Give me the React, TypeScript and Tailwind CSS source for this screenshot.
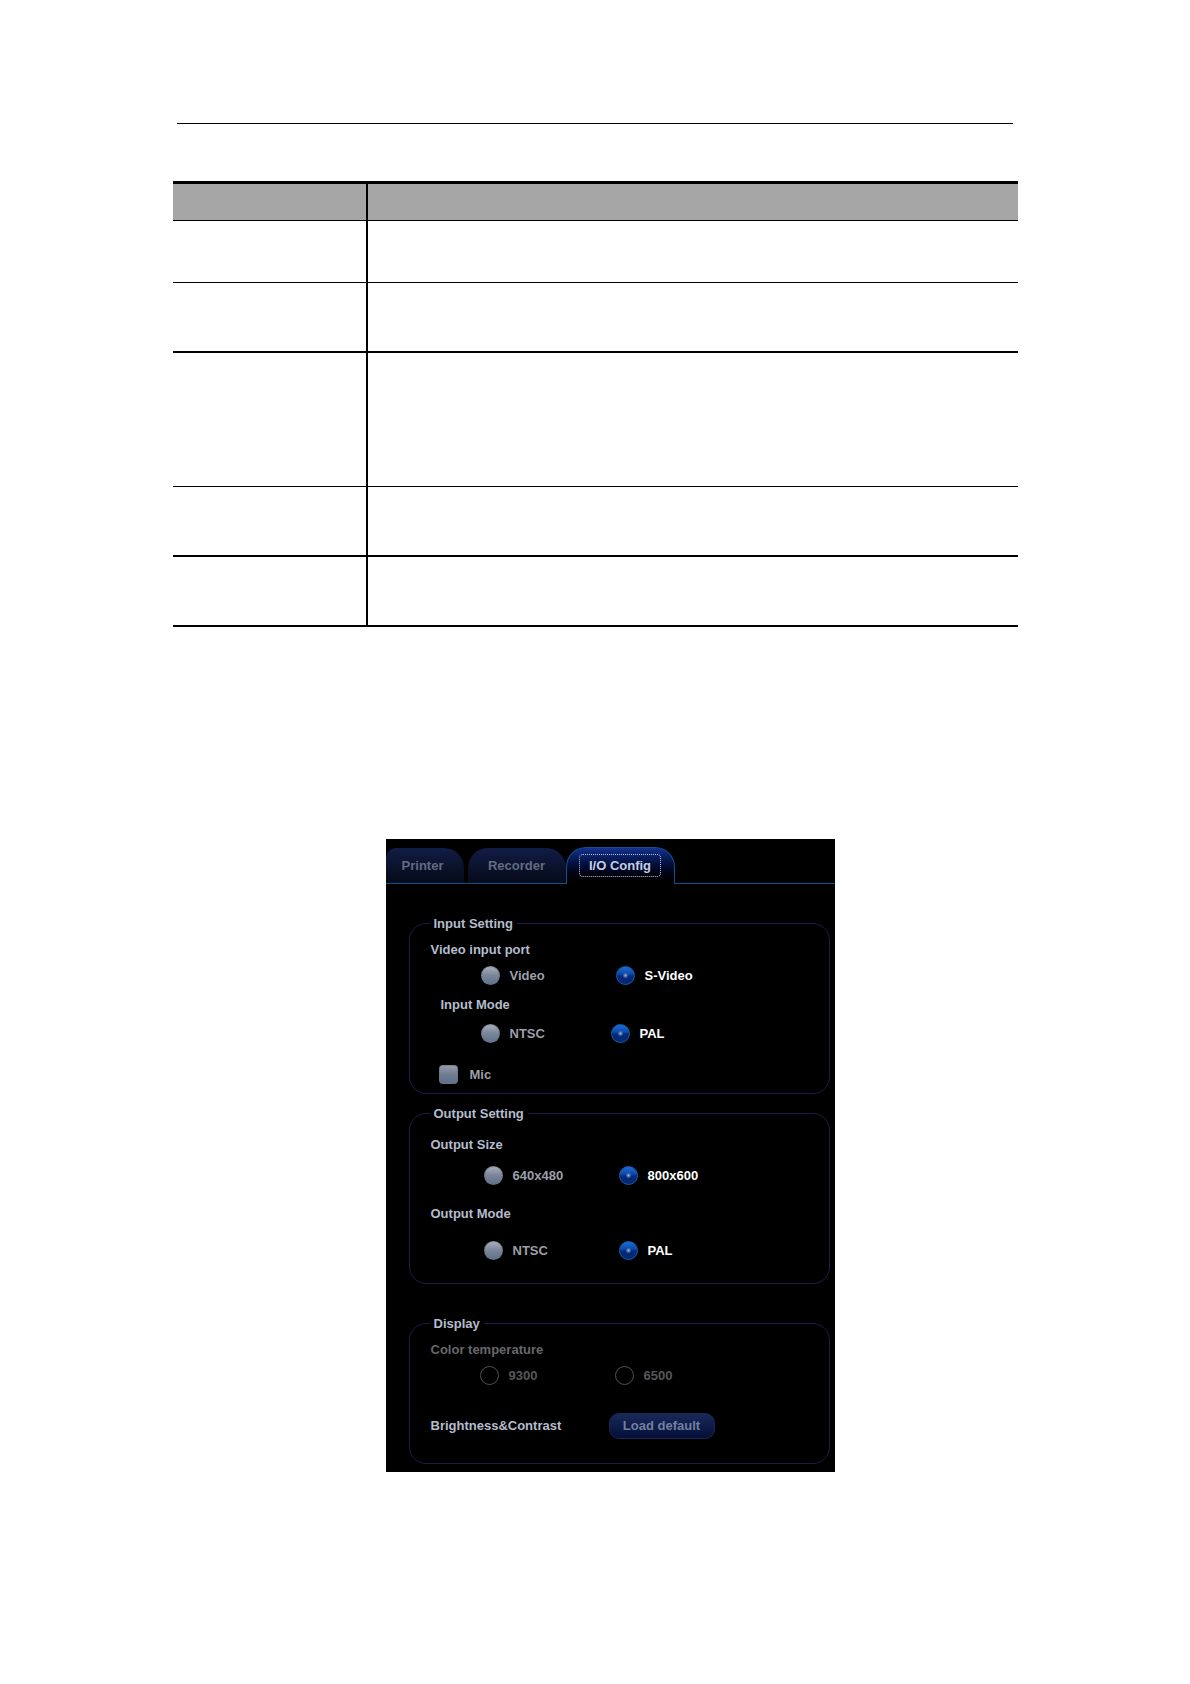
import React from 'react'

const labelColor = 'text-[#b4bccd]'

const rows = [
    'h-[62px] border-b',
    'h-[70px] border-b-2',
    'h-[134px] border-b',
    'h-[70px] border-b-2',
    'h-[70px] border-b-2',
]

type OptionProps = {
    name: string
    label: string
    checked?: boolean
    disabled?: boolean
}

function Option({ name, label, checked, disabled }: OptionProps) {
    return (
        <label className="flex h-5 items-start gap-[10px] text-[#9c9fa8] has-checked:text-white has-disabled:text-[#56575a]">
            <input
                type="radio"
                name={name}
                defaultChecked={checked}
                disabled={disabled}
                className="size-[19px] shrink-0 appearance-none rounded-full border border-[#6b7386]/60 bg-linear-to-b from-[#a3a9b6] from-10% via-[#7b8599] via-50% to-[#5b708c] bg-origin-border checked:border-[#155cb0] checked:bg-[radial-gradient(circle,#a9bfe0_0,#6584b8_1px,transparent_3px),linear-gradient(#1c6bd8_5%,#0d4aa8_42%,#04297a_54%,#06286e)] disabled:border-[#505050] disabled:bg-none"
            />
            {label}
        </label>
    )
}

function Group({ title, className, children }: { title: string; className: string; children: React.ReactNode }) {
    return (
        <fieldset className={`rounded-[17px] border border-[#1c1b52] px-[21px] ${className}`}>
            <legend className={`-ml-px h-[19px] px-1 leading-[19px] ${labelColor}`}>{title}</legend>
            {children}
        </fieldset>
    )
}

function Tabs() {
    return (
        <div role="tablist" className="flex h-[45px] items-end border-b border-[#11508c]">
            <button
                role="tab"
                aria-selected="false"
                className="mr-1 h-[35px] w-[78px] rounded-tl-[10px] rounded-tr-[20px] bg-linear-to-b from-[#121c46] to-[#050a18] pr-1 text-[#646b80]"
            >
                Printer
            </button>
            <button
                role="tab"
                aria-selected="false"
                className="h-[35px] w-[98px] rounded-t-[20px] bg-linear-to-b from-[#121c46] to-[#050a18] text-[#646b80]"
            >
                Recorder
            </button>
            <button
                role="tab"
                aria-selected="true"
                className="-mb-px flex h-[37px] w-[109px] items-start justify-center rounded-t-[20px] border border-b-0 border-[#11508c] bg-linear-to-b from-[#14318e] to-black pt-[6px] text-[#c3cce6]"
            >
                <span className="rounded-[4px] border border-dotted border-[#b8c3e4] px-[9px] leading-[21px]">I/O Config</span>
            </button>
        </div>
    )
}

function IOConfig() {
    return (
        <section className="w-full max-w-[449px] bg-black pb-2 text-[13px] leading-5 font-bold">
            <Tabs />
            <div className="pt-[30px] pr-[5px] pl-[23px]">
                <Group title="Input Setting" className="pb-2">
                    <p className={`mt-[7px] ${labelColor}`}>Video input port</p>
                    <div className="mt-[6px] grid grid-cols-[135px_1fr] pl-[50px]">
                        <Option name="port" label="Video" />
                        <Option name="port" label="S-Video" checked />
                    </div>
                    <p className={`mt-[9px] pl-[10px] ${labelColor}`}>Input Mode</p>
                    <div className="mt-[9px] grid grid-cols-[130px_1fr] pl-[50px]">
                        <Option name="input-mode" label="NTSC" />
                        <Option name="input-mode" label="PAL" checked />
                    </div>
                    <label className="mt-[21px] flex h-5 items-start gap-3 pl-2 text-[#9c9fa8]">
                        <input
                            type="checkbox"
                            className="size-[19px] appearance-none rounded-[4px] border border-[#6b7386]/60 bg-linear-to-b from-[#8f99a6] from-10% via-[#707c90] via-50% to-[#5b708c] bg-origin-border checked:from-[#1c6bd8] checked:to-[#0a3584]"
                        />
                        Mic
                    </label>
                </Group>
                <Group title="Output Setting" className="mt-[10px] pb-[22px]">
                    <p className={`mt-3 ${labelColor}`}>Output Size</p>
                    <div className="mt-[11px] grid grid-cols-[135px_1fr] pl-[53px]">
                        <Option name="size" label="640x480" />
                        <Option name="size" label="800x600" checked />
                    </div>
                    <p className={`mt-[18px] ${labelColor}`}>Output Mode</p>
                    <div className="mt-[17px] grid grid-cols-[135px_1fr] pl-[53px]">
                        <Option name="output-mode" label="NTSC" />
                        <Option name="output-mode" label="PAL" checked />
                    </div>
                </Group>
                <Group title="Display" className="mt-[30px] pb-6">
                    <p className="mt-[7px] text-[#66686c]">Color temperature</p>
                    <div className="mt-[6px] grid grid-cols-[135px_1fr] pl-[49px]">
                        <Option name="temperature" label="9300" disabled />
                        <Option name="temperature" label="6500" disabled />
                    </div>
                    <div className="mt-[27px] flex items-center">
                        <span className={`w-[178px] ${labelColor}`}>Brightness&amp;Contrast</span>
                        <button className="h-[26px] w-[106px] rounded-[10px] border border-[#1d2850] bg-linear-to-b from-[#18295a] to-[#050f38] text-[#7580a0]">
                            Load default
                        </button>
                    </div>
                </Group>
            </div>
        </section>
    )
}

function App() {
    return (
        <main className="min-h-screen bg-white pt-[123px] pb-20 font-['Liberation_Sans',Arial,sans-serif]">
            <div className="mx-auto w-full max-w-[845px]">
                <hr className="mr-[5px] ml-1 border-black" />
                <table className="mt-[57px] w-full table-fixed border-separate border-spacing-0">
                    <thead>
                        <tr className="bg-[#a6a6a6]">
                            <th className="h-10 w-[195px] border-t-[3px] border-r-2 border-b border-black p-0" />
                            <th className="border-t-[3px] border-b border-black p-0" />
                        </tr>
                    </thead>
                    <tbody>
                        {rows.map((row, i) => (
                            <tr key={i}>
                                <td className={`border-r-2 border-black p-0 ${row}`} />
                                <td className={`border-black p-0 ${row}`} />
                            </tr>
                        ))}
                    </tbody>
                </table>
                <div className="mt-[212px] flex justify-center pl-[30px]">
                    <IOConfig />
                </div>
            </div>
        </main>
    )
}

export default App
